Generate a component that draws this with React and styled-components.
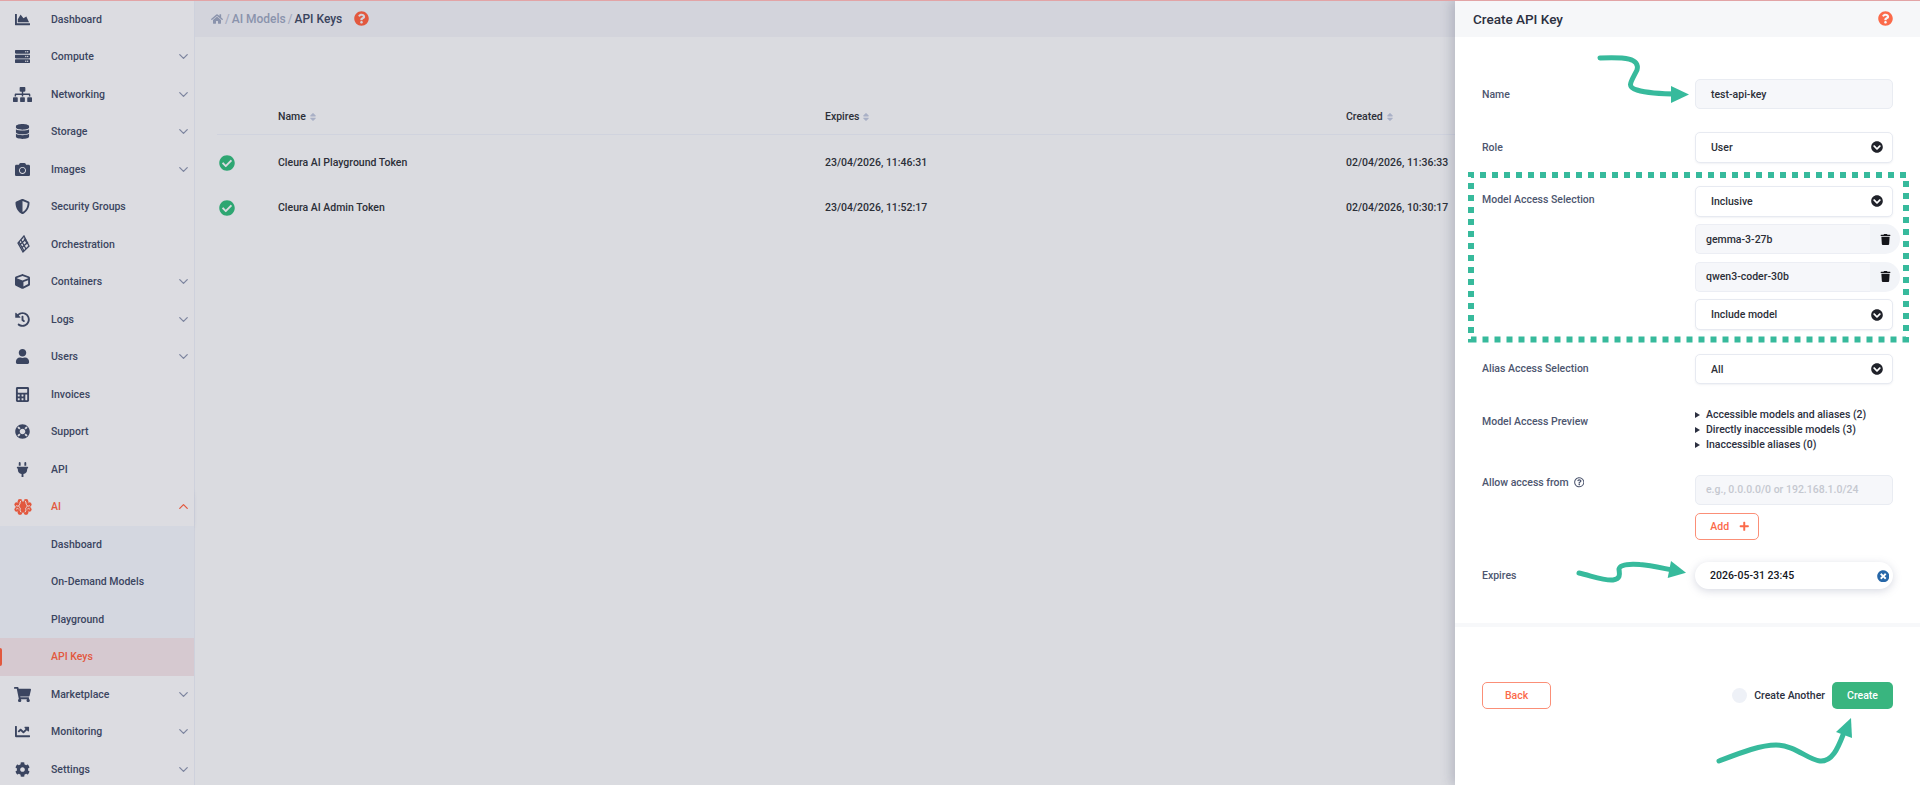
import styled, { createGlobalStyle } from "styled-components";
import {
  FaCalculator,
  FaCamera,
  FaChartArea,
  FaChartLine,
  FaCheckCircle,
  FaChevronCircleDown,
  FaCog,
  FaCube,
  FaDatabase,
  FaHistory,
  FaHome,
  FaLifeRing,
  FaPlug,
  FaPlus,
  FaQuestionCircle,
  FaRegQuestionCircle,
  FaServer,
  FaShieldAlt,
  FaShoppingCart,
  FaSitemap,
  FaSort,
  FaTimesCircle,
  FaTrash,
  FaUser,
} from "react-icons/fa";
import { FiChevronDown, FiChevronUp } from "react-icons/fi";

const GlobalStyle = createGlobalStyle`
  html, body {
    margin: 0;
    padding: 0;
    height: 100%;
    overflow: hidden;
  }
  body {
    font-family: Roboto, "Liberation Sans", sans-serif;
    font-weight: 500;
    font-size: 10.5px;
  }
`;

const Page = styled.div`
  position: relative;
  display: flex;
  width: 1920px;
  height: 785px;
  overflow: hidden;
  background: #dadbe0;

  &::before {
    content: "";
    position: absolute;
    inset: 0 0 auto 0;
    height: 1px;
    background: #e2a4a6;
    z-index: 5;
  }
`;

const Sidebar = styled.nav`
  flex: 0 0 194px;
  padding-top: 0.5px;
  background: #dcdce1;
  border-right: 1px solid #ced1dc;
`;

const NavRow = styled.div`
  display: flex;
  align-items: center;
  height: 37.5px;
  padding-left: 51px;
  padding-right: 3px;
  position: relative;
  color: ${(p) => (p.$active ? "#e2583e" : "#3b4560")};
  background: ${(p) => (p.$selected ? "#d6c9d0" : p.$sub ? "#d4d7e0" : "transparent")};
  box-shadow: ${(p) => (p.$open ? "0 3px 5px -2px rgba(90, 95, 120, 0.22)" : "none")};
`;

const NavMark = styled.span`
  position: absolute;
  left: 0;
  top: 10px;
  width: 2px;
  height: 18px;
  border-radius: 0 2px 2px 0;
  background: #e2583e;
`;

const NavIcon = styled.span`
  position: absolute;
  left: 12px;
  width: 21px;
  height: 18px;
  display: flex;
  align-items: center;
  justify-content: center;
  color: ${(p) => (p.$active ? "#e2583e" : "#3b4560")};
  font-size: ${(p) => p.$size || 15}px;
`;

const NavLabel = styled.span`
  flex: 1;
`;

const NavCaret = styled.span`
  display: flex;
  color: ${(p) => (p.$active ? "#e2583e" : "#7d859f")};
  font-size: 15px;
`;

const Main = styled.main`
  flex: 1;
  min-width: 0;
`;

const TopBar = styled.div`
  display: flex;
  align-items: center;
  height: 37px;
  padding-left: 16px;
  background: #d3d4dc;
  font-size: 12px;
  color: #8a93ac;
`;

const Crumb = styled.span`
  color: ${(p) => (p.$current ? "#39435c" : "#8a93ac")};
`;

const Slash = styled.span`
  margin: 0 2px;
  color: #a4abbf;
`;

const HelpIcon = styled.span`
  display: flex;
  margin-left: ${(p) => p.$gap || 0}px;
  color: ${(p) => p.$color || "#e2583e"};
  font-size: 15px;
`;

const Table = styled.div`
  margin: 60px 0 0 22px;
  width: 1244px;
  color: #2c2f38;
`;

const TableRow = styled.div`
  display: grid;
  grid-template-columns: 61px 547px 521px 1fr;
  align-items: center;
  box-sizing: border-box;
  height: ${(p) => (p.$head ? 38 : 45)}px;
  padding-top: ${(p) => (p.$head ? 2 : 0)}px;
  border-bottom: ${(p) => (p.$head ? "1px solid #d0d3de" : "none")};
  margin-bottom: ${(p) => (p.$head ? 5 : 0)}px;
`;

const HeadCell = styled.span`
  display: flex;
  align-items: center;
  gap: 2px;
`;

const SortIcon = styled(FaSort)`
  color: #a9b0c6;
  font-size: 10px;
`;

const StatusIcon = styled.span`
  display: flex;
  padding-left: 2px;
  color: #2ea672;
  font-size: 16px;
`;

const Panel = styled.aside`
  position: relative;
  flex: 0 0 465px;
  background: #fff;
  box-shadow: -4px 0 10px rgba(70, 72, 100, 0.22);
  z-index: 2;
`;

const PanelHead = styled.div`
  display: flex;
  align-items: center;
  justify-content: space-between;
  height: 37px;
  padding: 0 27px 0 18px;
  background: #f6f7f9;
  font-size: 13.5px;
  color: #2c3040;
`;

const Form = styled.div`
  padding: 42px 27px 0;
  height: 590px;
  box-sizing: border-box;
  border-bottom: 4px solid #f7f8fa;
`;

const FormRow = styled.div`
  display: grid;
  grid-template-columns: 213px 198px;
  align-items: ${(p) => (p.$top ? "start" : "center")};
  margin-bottom: ${(p) => p.$after ?? 23}px;
`;

const FieldLabel = styled.label`
  display: flex;
  align-items: center;
  gap: 5px;
  color: #4d566f;
  padding-top: ${(p) => p.$pad || 0}px;
`;

const Stack = styled.div`
  display: flex;
  flex-direction: column;
  gap: ${(p) => p.$gap ?? 7.6}px;
`;

const TextField = styled.div`
  display: flex;
  align-items: center;
  box-sizing: border-box;
  height: 30px;
  padding: 0 15px;
  border: 1px solid #e9ecf2;
  border-radius: 5px;
  background: #f6f7fa;
  color: ${(p) => (p.$placeholder ? "#c5c8d0" : "#2c2f38")};
  padding-left: ${(p) => (p.$placeholder ? 10 : 15)}px;
`;

const SelectBox = styled.div`
  display: flex;
  align-items: center;
  justify-content: space-between;
  box-sizing: border-box;
  height: 30.8px;
  padding: 0 9px 0 15px;
  border: 1px solid #e7eaf1;
  border-radius: 5px;
  background: #fff;
  color: #2c2f38;
  box-shadow: 0 1px 2px rgba(120, 130, 160, 0.1);

  svg {
    font-size: 12px;
    color: #20222a;
  }
`;

const TagRow = styled.div`
  display: flex;
  align-items: center;
  height: 30px;
  width: 205px;
`;

const TagName = styled.div`
  flex: 1;
  display: flex;
  align-items: center;
  height: 100%;
  box-sizing: border-box;
  padding-left: 10px;
  border: 1px solid #eceef4;
  border-right: 0;
  border-radius: 5px 0 0 5px;
  background: #f6f7fa;
  color: #2c2f38;
`;

const TagDelete = styled.div`
  flex: 0 0 30px;
  display: flex;
  align-items: center;
  justify-content: center;
  height: 100%;
  border-radius: 0 15px 15px 0;
  background: #f2f4f8;
  color: #14151a;
  font-size: 11px;
`;

const PreviewList = styled.div`
  display: flex;
  flex-direction: column;
`;

const PreviewLine = styled.div`
  display: flex;
  align-items: center;
  height: 15px;
  color: #2c3040;
`;

const Triangle = styled.span`
  width: 0;
  height: 0;
  margin-right: 6px;
  border-left: 5px solid #2c3040;
  border-top: 3.5px solid transparent;
  border-bottom: 3.5px solid transparent;
`;

const OutlineButton = styled.button`
  display: flex;
  align-items: center;
  justify-content: center;
  gap: 10px;
  box-sizing: border-box;
  width: ${(p) => p.$width}px;
  height: 27px;
  padding: 0 0 0 ${(p) => p.$shift || 0}px;
  border: 1px solid #fb8f77;
  border-radius: 5px;
  background: #fff;
  color: #fb6a4a;
  font: inherit;
`;

const DateField = styled.div`
  display: flex;
  align-items: center;
  justify-content: space-between;
  box-sizing: border-box;
  height: 27px;
  padding: 0 4px 0 15px;
  border-radius: 14px;
  background: #fff;
  color: #16181f;
  box-shadow: 0 2px 9px rgba(110, 120, 150, 0.28);

  svg {
    color: #2767a8;
    font-size: 12.5px;
  }
`;

const Footer = styled.div`
  display: flex;
  align-items: center;
  justify-content: space-between;
  padding: 55px 27px 0;
`;

const FooterRight = styled.div`
  display: flex;
  align-items: center;
`;

const RadioDot = styled.span`
  width: 15px;
  height: 15px;
  margin-right: 7px;
  border-radius: 50%;
  background: #eef1f7;
`;

const AnotherLabel = styled.span`
  margin-right: 7px;
  color: #2c3040;
`;

const CreateButton = styled.button`
  width: 61px;
  height: 27px;
  padding: 0;
  border: 0;
  border-radius: 5px;
  background: #39b57f;
  color: #fff;
  font: inherit;
`;

const Annotations = styled.svg`
  position: absolute;
  inset: 0;
  width: 1920px;
  height: 785px;
  z-index: 6;
  pointer-events: none;
`;

function OrchestrationIcon() {
  return (
    <svg width="14" height="19" viewBox="0 0 14 19" fill="none" stroke="currentColor" strokeWidth="1.3">
      <path d="M8 1 L2 8 L7 17 L13 11 Z" />
      <path d="M5 5 L10 14 M8 3.5 L11.5 9 M3 7 L8 16 M3.5 10 L10 4 M5.5 13 L12 7" />
    </svg>
  );
}

function BrainIcon() {
  return (
    <svg width="18" height="18" viewBox="0 0 18 18">
      <g fill="currentColor">
        <circle cx="9" cy="9" r="5.5" />
        <circle cx="6" cy="3.4" r="2.4" />
        <circle cx="12" cy="3.4" r="2.4" />
        <circle cx="2.8" cy="6.6" r="2.4" />
        <circle cx="15.2" cy="6.6" r="2.4" />
        <circle cx="2.8" cy="11.4" r="2.4" />
        <circle cx="15.2" cy="11.4" r="2.4" />
        <circle cx="6" cy="14.6" r="2.4" />
        <circle cx="12" cy="14.6" r="2.4" />
      </g>
      <g fill="none" stroke="#e9dfe0" strokeWidth="1" strokeLinecap="round">
        <path d="M6.8 3c-1.6 1.4-.2 2.6-1.4 3.8-1.2 1.2-.3 2.3.6 2.9 1 .7-.9 2.2.8 4.3" />
        <path d="M11.2 3c1.6 1.4.2 2.6 1.4 3.8 1.2 1.2.3 2.3-.6 2.9-1 .7.9 2.2-.8 4.3" />
        <path d="M2.4 7.6c.6.6 1.2.6 1.8.3M15.6 7.6c-.6.6-1.2.6-1.8.3" />
        <path d="M2.4 11c.6-.5 1.2-.5 1.8-.2M15.6 11c-.6-.5-1.2-.5-1.8-.2" />
      </g>
    </svg>
  );
}

const navItems = [
  { label: "Dashboard", icon: <FaChartArea /> },
  { label: "Compute", icon: <FaServer />, caret: true },
  { label: "Networking", icon: <FaSitemap />, caret: true, size: 19 },
  { label: "Storage", icon: <FaDatabase />, caret: true },
  { label: "Images", icon: <FaCamera />, caret: true },
  { label: "Security Groups", icon: <FaShieldAlt /> },
  { label: "Orchestration", icon: <OrchestrationIcon /> },
  { label: "Containers", icon: <FaCube />, caret: true },
  { label: "Logs", icon: <FaHistory />, caret: true },
  { label: "Users", icon: <FaUser />, caret: true },
  { label: "Invoices", icon: <FaCalculator /> },
  { label: "Support", icon: <FaLifeRing /> },
  { label: "API", icon: <FaPlug /> },
];

const navBottom = [
  { label: "Marketplace", icon: <FaShoppingCart />, caret: true, size: 17 },
  { label: "Monitoring", icon: <FaChartLine />, caret: true },
  { label: "Settings", icon: <FaCog />, caret: true },
];

const subItems = ["Dashboard", "On-Demand Models", "Playground"];

const tokens = [
  { name: "Cleura AI Playground Token", expires: "23/04/2026, 11:46:31", created: "02/04/2026, 11:36:33" },
  { name: "Cleura AI Admin Token", expires: "23/04/2026, 11:52:17", created: "02/04/2026, 10:30:17" },
];

function NavEntry({ item }) {
  return (
    <NavRow>
      <NavIcon $size={item.size}>{item.icon}</NavIcon>
      <NavLabel>{item.label}</NavLabel>
      {item.caret && (
        <NavCaret>
          <FiChevronDown />
        </NavCaret>
      )}
    </NavRow>
  );
}

function Select({ children }) {
  return (
    <SelectBox>
      {children}
      <FaChevronCircleDown />
    </SelectBox>
  );
}

function ModelTag({ children }) {
  return (
    <TagRow>
      <TagName>{children}</TagName>
      <TagDelete>
        <FaTrash />
      </TagDelete>
    </TagRow>
  );
}

const App = () => {
  return (
    <Page>
      <GlobalStyle />
      <Sidebar>
        {navItems.map((item) => (
          <NavEntry key={item.label} item={item} />
        ))}
        <NavRow $active $open>
          <NavIcon $active>
            <BrainIcon />
          </NavIcon>
          <NavLabel>AI</NavLabel>
          <NavCaret $active>
            <FiChevronUp />
          </NavCaret>
        </NavRow>
        {subItems.map((label) => (
          <NavRow key={label} $sub>
            <NavLabel>{label}</NavLabel>
          </NavRow>
        ))}
        <NavRow $active $selected>
          <NavMark />
          <NavLabel>API Keys</NavLabel>
        </NavRow>
        {navBottom.map((item) => (
          <NavEntry key={item.label} item={item} />
        ))}
      </Sidebar>

      <Main>
        <TopBar>
          <FaHome color="#8a93ac" size={12} />
          <Slash>/</Slash>
          <Crumb>AI Models</Crumb>
          <Slash>/</Slash>
          <Crumb $current>API Keys</Crumb>
          <HelpIcon $gap={12}>
            <FaQuestionCircle />
          </HelpIcon>
        </TopBar>
        <Table>
          <TableRow $head>
            <span />
            <HeadCell>
              Name <SortIcon />
            </HeadCell>
            <HeadCell>
              Expires <SortIcon />
            </HeadCell>
            <HeadCell>
              Created <SortIcon />
            </HeadCell>
          </TableRow>
          {tokens.map((token) => (
            <TableRow key={token.name}>
              <StatusIcon>
                <FaCheckCircle />
              </StatusIcon>
              <span>{token.name}</span>
              <span>{token.expires}</span>
              <span>{token.created}</span>
            </TableRow>
          ))}
        </Table>
      </Main>

      <Panel>
        <PanelHead>
          Create API Key
          <HelpIcon $color="#fb6a4a">
            <FaQuestionCircle />
          </HelpIcon>
        </PanelHead>
        <Form>
          <FormRow>
            <FieldLabel>Name</FieldLabel>
            <TextField>test-api-key</TextField>
          </FormRow>
          <FormRow>
            <FieldLabel>Role</FieldLabel>
            <Select>User</Select>
          </FormRow>
          <FormRow $top $after={23.5}>
            <FieldLabel $pad={7.5}>Model Access Selection</FieldLabel>
            <Stack>
              <Select>Inclusive</Select>
              <ModelTag>gemma-3-27b</ModelTag>
              <ModelTag>qwen3-coder-30b</ModelTag>
              <Select>Include model</Select>
            </Stack>
          </FormRow>
          <FormRow $top $after={23}>
            <FieldLabel $pad={8.5}>Alias Access Selection</FieldLabel>
            <Select>All</Select>
          </FormRow>
          <FormRow $top $after={22.5}>
            <FieldLabel $pad={8}>Model Access Preview</FieldLabel>
            <PreviewList>
              <PreviewLine>
                <Triangle />
                Accessible models and aliases (2)
              </PreviewLine>
              <PreviewLine>
                <Triangle />
                Directly inaccessible models (3)
              </PreviewLine>
              <PreviewLine>
                <Triangle />
                Inaccessible aliases (0)
              </PreviewLine>
            </PreviewList>
          </FormRow>
          <FormRow $top $after={22.4}>
            <FieldLabel $pad={1}>
              Allow access from <FaRegQuestionCircle size={10.5} />
            </FieldLabel>
            <Stack $gap={8}>
              <TextField $placeholder>e.g., 0.0.0.0/0 or 192.168.1.0/24</TextField>
              <OutlineButton $width={64} $shift={6}>
                Add <FaPlus size={10.5} />
              </OutlineButton>
            </Stack>
          </FormRow>
          <FormRow>
            <FieldLabel>Expires</FieldLabel>
            <DateField>
              2026-05-31 23:45
              <FaTimesCircle />
            </DateField>
          </FormRow>
        </Form>
        <Footer>
          <OutlineButton $width={69}>Back</OutlineButton>
          <FooterRight>
            <RadioDot />
            <AnotherLabel>Create Another</AnotherLabel>
            <CreateButton>Create</CreateButton>
          </FooterRight>
        </Footer>
      </Panel>

      <Annotations viewBox="0 0 1920 785" fill="none">
        <rect
          x="1471"
          y="175"
          width="435"
          height="164.5"
          stroke="#37ba9c"
          strokeWidth="6"
          strokeDasharray="6 6"
          strokeDashoffset="3"
        />
        <g stroke="#37ba9c" strokeWidth="5" strokeLinecap="round" strokeLinejoin="round">
          <path d="M1600 58 C1625 57 1640 58 1637 70 C1631 82 1626 87 1637 90 C1650 94 1665 94 1678 94" />
          <path d="M1579 573 C1592 576 1605 581 1613 580 C1622 579 1619 572 1619 569 C1620 565 1628 563.5 1640 564.5 C1650 565 1662 568 1672 570" />
          <path d="M1719 761 C1740 753 1760 745 1776 745 C1795 745 1808 760 1820 761 C1832 762 1838 748 1843 735" />
        </g>
        <g fill="#37ba9c">
          <path d="M1671 86 L1689 94.5 L1671 103 Z" />
          <path d="M1671 561 L1686 572.7 L1667.7 578 Z" />
          <path d="M1836 732 L1851 718 L1852 738 Z" />
        </g>
      </Annotations>
    </Page>
  );
};

export default App;
